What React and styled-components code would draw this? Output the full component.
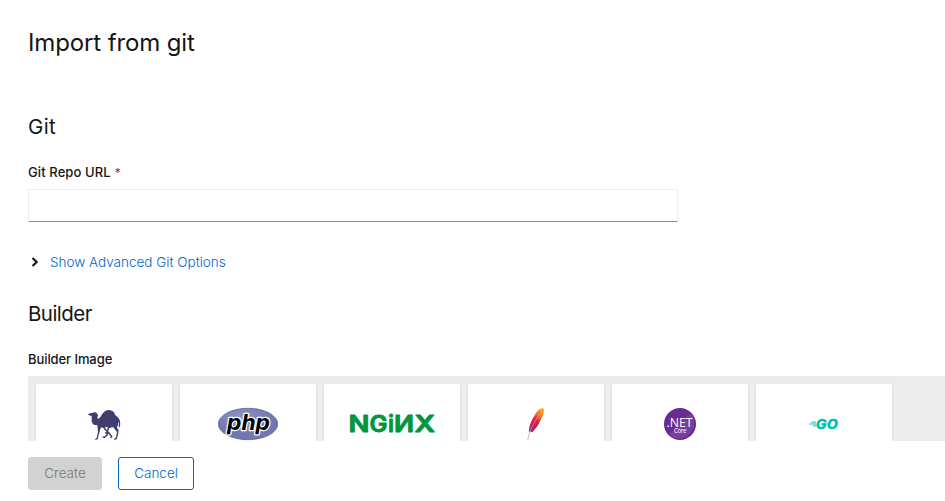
import React from "react";
import styled, { createGlobalStyle } from "styled-components";

const GlobalStyle = createGlobalStyle`
  * { box-sizing: border-box; }
  body { margin: 0; background: #fff; color: #151515; font-family: Inter, "Open Sans", sans-serif; overflow: hidden; }
`;

const Page = styled.main`
  display: flex;
  flex-direction: column;
  width: 100%;
  height: 501px;
  padding-left: 28px;
`;
const FormBody = styled.div`
  height: 441px;
  overflow: hidden;
  display: flex;
  flex-direction: column;
`;
const Title = styled.h1`
  margin: 27px 0 52px;
  font-size: 24px;
  line-height: 32px;
  font-weight: 400;
  letter-spacing: -0.13px;
`;
const SectionTitle = styled.h2`
  margin: 0;
  font-size: 20.5px;
  line-height: 32px;
  font-weight: 400;
  letter-spacing: ${(p) => p.$spacing || "0"};
`;
const Label = styled.label`
  display: block;
  margin-top: ${(p) => p.$top};
  font-size: 13px;
  line-height: 20px;
  font-weight: 500;
  letter-spacing: ${(p) => p.$spacing || "0"};
`;
const Required = styled.span`
  color: #c9190b;
  font-size: 12px;
  font-weight: 400;
  margin-left: 4px;
`;
const Input = styled.input`
  display: block;
  width: 650px;
  height: 33px;
  flex: none;
  margin: 6px 0 0;
  padding: 0 8px;
  border: 1px solid #ededed;
  border-bottom-color: #8a8d90;
  border-radius: 0;
  outline: none;
`;
const Toggle = styled.button`
  display: flex;
  align-items: center;
  gap: 11px;
  height: 24px;
  margin: 28px 0 24px;
  padding: 0 0 0 3px;
  border: 0;
  background: none;
  color: #06c;
  font: 300 13.5px/24px Inter, sans-serif;
`;
const Tray = styled.div`
  display: flex;
  gap: 8px;
  flex: none;
  height: 120px;
  margin-top: 7px;
  padding: 8px;
  background: #ececec;
`;
const Card = styled.div`
  display: flex;
  justify-content: center;
  width: 136px;
  height: 104px;
  flex: none;
  padding-top: 16px;
  background: #fff;
  box-shadow: 0 1px 2px rgba(3, 3, 3, 0.18);
`;
const Logo = styled.svg`
  display: block;
  flex: none;
  height: 45px;
  width: ${(p) => p.$w}px;
`;
const Footer = styled.footer`
  display: flex;
  gap: 16px;
  padding-top: 16px;
`;
const Button = styled.button`
  width: ${(p) => (p.$primary ? 74 : 76)}px;
  height: 33px;
  padding: 0 0 1px;
  border: 1px solid ${(p) => (p.$primary ? "#d2d2d2" : "#06c")};
  border-radius: 3px;
  background: ${(p) => (p.$primary ? "#d2d2d2" : "#fff")};
  color: ${(p) => (p.$primary ? "#777b7f" : "#06c")};
  font: 300 13.5px/29px Inter, sans-serif;
`;

const Camel = () => (
  <Logo $w={60} viewBox="-3 0 180 135">
    <g fill="#3f3e6e">
      <path d="M39 42 L45 40 L54 38 L58 36 L65 39 L69 45 L67 54 L70 57 L77 50 L81 43 L87 36 L95 31 L103 30 L111 32 L117 37 L121 46 L128 51 L134 60 L136 72 L133 84 L131 79 L132 69 L130 65 L129 76 L124 82 L111 82 L103 85 L95 80 L86 84 L75 82 L68 76 L56 74 L50 65 L50 48 L42 46Z" />
      <path d="M67 74 L79 79 L75 91 L71 105 L68 118 L60 120 L61 117 L65 114 L69 96Z" />
      <path d="M113 76 L128 71 L126 83 L131 91 L129 104 L125 118 L117 120 L118 116 L123 112 L126 96 L117 85Z" />
    </g>
    <path d="M84 76L90 88L102 99L110 110L107 113M102 78L98 91L97 104L89 112L83 112M97 102L91 97" fill="none" stroke="#3f3e6e" strokeWidth="4.5" />
  </Logo>
);

const Php = () => (
  <Logo $w={76} viewBox="0 0 76 45">
    <defs>
      <radialGradient id="phpFill" cx="40%" cy="30%">
        <stop stopColor="#9295c8" />
        <stop offset="1" stopColor="#7377ad" />
      </radialGradient>
    </defs>
    <ellipse cx="38" cy="24" rx="29.7" ry="15.7" fill="url(#phpFill)" stroke="#5e6199" strokeWidth="0.8" />
    <text x="17" y="29.6" textLength="43" lengthAdjust="spacingAndGlyphs" fontFamily="Inter, sans-serif" fontSize="21.5" fontWeight="700" fontStyle="italic" fill="#000" stroke="#fff" strokeWidth="2.4" strokeLinejoin="round" paintOrder="stroke">php</text>
  </Logo>
);

const Nginx = () => (
  <Logo $w={88} viewBox="0 0 88 45">
    <g fill="#009639" stroke="#009639" strokeWidth="0.9" strokeLinejoin="round" fontFamily="Inter, sans-serif" fontWeight="600" fontSize="22.5">
      <text x="0.5" y="32.4" textLength="21" lengthAdjust="spacingAndGlyphs">N</text>
      <text x="21.5" y="32.4" textLength="18" lengthAdjust="spacingAndGlyphs">G</text>
      <text x="40" y="32.4" textLength="6" lengthAdjust="spacingAndGlyphs">i</text>
      <text x="46" y="32.4" textLength="20" lengthAdjust="spacingAndGlyphs">И</text>
      <text x="66.5" y="32.4" textLength="20.5" lengthAdjust="spacingAndGlyphs">X</text>
    </g>
  </Logo>
);

const Feather = () => (
  <Logo $w={40} viewBox="5 0 120 135">
    <defs>
      <linearGradient id="featherFill" x1="0.8" y1="0" x2="0.2" y2="1">
        <stop stopColor="#fbab1c" />
        <stop offset="0.3" stopColor="#f4702b" />
        <stop offset="0.5" stopColor="#e01f40" />
        <stop offset="0.78" stopColor="#cb1645" />
        <stop offset="1" stopColor="#7a3a91" />
      </linearGradient>
    </defs>
    <path d="M87 25 C78 22 68 33 62 44 C53 58 45 75 43 94 L54 97 C66 85 75 70 82 55 C88 43 91 31 87 25Z" fill="url(#featherFill)" />
    <path d="M74 44C64 60 51 82 45 101L40 120" fill="none" stroke="#dc8cac" strokeWidth="2.2" />
  </Logo>
);

const DotNet = () => (
  <Logo $w={50} viewBox="0 0 50 45">
    <circle cx="25" cy="24" r="16" fill="#672b91" />
    <path d="M36 12.5A16 16 0 0 1 13.5 35Z" fill="#793da0" />
    <g fill="#fff" fontFamily='"Open Sans", sans-serif'>
      <text x="11.5" y="26.7" fontSize="13" textLength="26" lengthAdjust="spacingAndGlyphs">.NET</text>
      <text x="19" y="33.3" fontSize="6.2" textLength="12.5">Core</text>
    </g>
  </Logo>
);

const Go = () => (
  <Logo $w={50} viewBox="0 0 50 45">
    <path d="M12 22.2H17M10 24H17M14 25.8H17" stroke="#00bfb3" strokeWidth="0.9" />
    <text x="16.8" y="29" textLength="22" lengthAdjust="spacingAndGlyphs" fontFamily="Inter, sans-serif" fontWeight="800" fontStyle="italic" fontSize="13" fill="#00bfb3" stroke="#00bfb3" strokeWidth="0.3">GO</text>
  </Logo>
);

const builders = [Camel, Php, Nginx, Feather, DotNet, Go];

export default function App() {
  return (
    <>
      <GlobalStyle />
      <Page>
        <FormBody>
          <Title>Import from git</Title>
          <SectionTitle $spacing="0.4px">Git</SectionTitle>
          <Label htmlFor="repo" $top="19px" $spacing="0.1px">Git Repo URL<Required>*</Required></Label>
          <Input id="repo" />
          <Toggle type="button">
            <svg width="8" height="10" viewBox="0 0 8 10">
              <path d="M1.5 1L5.7 5L1.5 9" fill="none" stroke="#151515" strokeWidth="2.1" />
            </svg>
            Show Advanced Git Options
          </Toggle>
          <SectionTitle $spacing="-0.55px">Builder</SectionTitle>
          <Label as="div" $top="19px" $spacing="-0.08px">Builder Image</Label>
          <Tray>
            {builders.map((Icon, i) => (
              <Card key={i}><Icon /></Card>
            ))}
          </Tray>
        </FormBody>
        <Footer>
          <Button $primary disabled>Create</Button>
          <Button>Cancel</Button>
        </Footer>
      </Page>
    </>
  );
}
